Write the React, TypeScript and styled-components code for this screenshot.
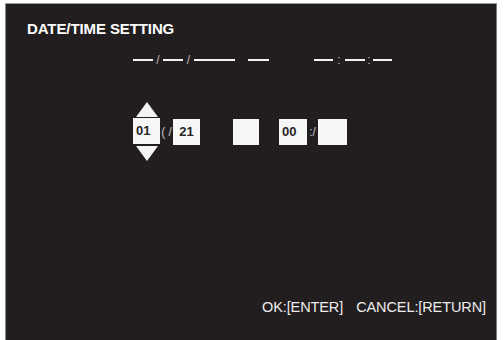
import React from "react";
import styled, { createGlobalStyle } from "styled-components";

const GlobalStyle = createGlobalStyle`
  html, body {
    margin: 0;
    padding: 0;
    background: #ffffff;
    font-family: "Liberation Sans", Arial, sans-serif;
  }
`;

const Screen = styled.div`
  width: 504px;
  height: 340px;
  padding: 3px 6px 0 5px;
  box-sizing: border-box;
  overflow: hidden;
`;

const Panel = styled.div`
  display: flex;
  flex-direction: column;
  width: 492px;
  height: 337px;
  box-sizing: border-box;
  background: #221e1f;
  border-top: 1px solid #9a9a9a;
  border-left: 1px solid #8c8c8c;
  border-right: 1px solid #7c7c7c;
  padding: 17px 10px 25px 21px;
  color: #ffffff;
`;

const Title = styled.div`
  font-size: 15px;
  line-height: 15px;
  font-weight: bold;
  letter-spacing: -0.1px;
`;

const DashRow = styled.div`
  display: flex;
  align-items: center;
  height: 12px;
  margin: 18px 0 0 106px;
`;

const Dash = styled.span<{ $w: number }>`
  display: block;
  width: ${(p) => p.$w}px;
  height: 2px;
  background: #f2f2f2;
`;

const Sep = styled.span<{ $w: number }>`
  display: block;
  width: ${(p) => p.$w}px;
  font-size: 12px;
  line-height: 12px;
  text-align: center;
  color: #b8b8b8;
`;

const Gap = styled.span<{ $w: number }>`
  display: block;
  width: ${(p) => p.$w}px;
`;

const EditRow = styled.div`
  display: flex;
  align-items: center;
  margin: 36px 0 0 106px;
`;

const Spinner = styled.div`
  display: flex;
  flex-direction: column;
  align-items: center;
  gap: 1px;
`;

const Arrow = styled.span<{ $down?: boolean }>`
  display: block;
  width: 0;
  height: 0;
  border-left: 11px solid transparent;
  border-right: 11px solid transparent;
  ${(p) =>
    p.$down
      ? "border-top: 15px solid #f4f4f4; margin-top: 1px;"
      : "border-bottom: 15px solid #f4f4f4;"}
`;

const Field = styled.div<{ $w: number; $pad?: number }>`
  box-sizing: border-box;
  width: ${(p) => p.$w}px;
  height: 26px;
  background: #f7f7f7;
  color: #262626;
  font-size: 13px;
  font-weight: bold;
  line-height: 26px;
  padding-left: ${(p) => p.$pad ?? 0}px;
  text-align: ${(p) => (p.$pad === undefined ? "center" : "left")};
`;

const FieldSep = styled.span<{ $w: number }>`
  display: block;
  width: ${(p) => p.$w}px;
  font-size: 12px;
  text-align: center;
  color: #c4c4c4;
`;

const Footer = styled.div`
  margin-top: auto;
  display: flex;
  justify-content: flex-end;
  gap: 13px;
  font-size: 14.5px;
  line-height: 16px;
  letter-spacing: -0.1px;
  color: #ececec;
`;

export default function App() {
  return (
    <>
      <GlobalStyle />
      <Screen>
        <Panel>
          <Title>DATE/TIME SETTING</Title>
          <DashRow>
            <Dash $w={20} />
            <Sep $w={10}>/</Sep>
            <Dash $w={20} />
            <Sep $w={11}>/</Sep>
            <Dash $w={41} />
            <Gap $w={13} />
            <Dash $w={21} />
            <Gap $w={45} />
            <Dash $w={19} />
            <Sep $w={12}>:</Sep>
            <Dash $w={20} />
            <Sep $w={8}>:</Sep>
            <Dash $w={19} />
          </DashRow>
          <EditRow>
            <Spinner>
              <Arrow />
              <Field $w={27} $pad={3}>01</Field>
              <Arrow $down />
            </Spinner>
            <FieldSep $w={13}>( /</FieldSep>
            <Field $w={27}>21</Field>
            <Gap $w={33} />
            <Field $w={26} />
            <Gap $w={20} />
            <Field $w={28} $pad={3}>00</Field>
            <FieldSep $w={11}>:/</FieldSep>
            <Field $w={29} />
          </EditRow>
          <Footer>
            <span>OK:[ENTER]</span>
            <span>CANCEL:[RETURN]</span>
          </Footer>
        </Panel>
      </Screen>
    </>
  );
}
